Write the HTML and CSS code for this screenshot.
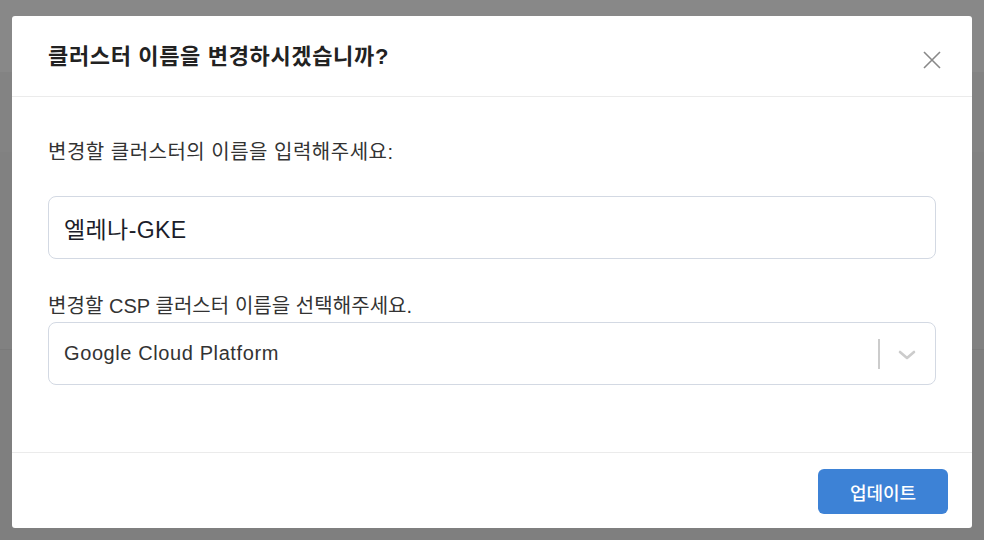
FILE: index.html
```html
<!DOCTYPE html>
<html lang="ko">
<head>
<meta charset="utf-8">
<title>클러스터 이름 변경</title>
<link rel="stylesheet" href="styles.css">
</head>
<body>
<div class="modal">
  <div class="modal-header">
    <h2 class="modal-title">클러스터 이름을 변경하시겠습니까?</h2>
    <button class="close-btn" aria-label="닫기">
      <svg width="18" height="18" viewBox="0 0 18 18"><path d="M1 1 L17 17 M17 1 L1 17" stroke="#888888" stroke-width="1.6" fill="none"/></svg>
    </button>
  </div>
  <div class="modal-body">
    <label class="field-label first">변경할 클러스터의 이름을 입력해주세요:</label>
    <div class="text-input">엘레나-GKE</div>
    <label class="field-label second">변경할 CSP 클러스터 이름을 선택해주세요.</label>
    <div class="select">
      <span class="select-value">Google Cloud Platform</span>
      <span class="select-indicators">
        <span class="select-sep"></span>
        <svg class="chevron" width="20" height="20" viewBox="0 0 20 20"><path d="M3 7 L10 13 L17 7" stroke="#cccccc" stroke-width="2.6" fill="none" stroke-linecap="round" stroke-linejoin="round"/></svg>
      </span>
    </div>
  </div>
  <div class="modal-footer">
    <button class="primary-btn">업데이트</button>
  </div>
</div>
</body>
</html>
```
FILE: styles.css
```css
html, body {
  margin: 0;
  height: 100%;
}
body {
  padding: 16px 12px 12px;
  box-sizing: border-box;
  background: linear-gradient(to bottom, #888888 0, #888888 72px, #838383 72px, #838383 152px, #818181 152px, #818181 349px, #7a7a7a 349px, #7a7a7a 350px, #7f7f7f 350px);
  font-family: "Liberation Sans", "Noto Sans CJK KR", sans-serif;
}
.modal {
  width: 960px;
  height: 512px;
  background: #ffffff;
  border-radius: 3px;
  display: flex;
  flex-direction: column;
  box-sizing: border-box;
}
.modal-header {
  height: 81px;
  box-sizing: border-box;
  border-bottom: 1px solid #ebebeb;
  display: flex;
  align-items: center;
  justify-content: space-between;
  padding: 0 31px 0 36px;
}
.modal-title {
  margin: 0;
  font-size: 22px;
  font-weight: 700;
  color: #222222;
  line-height: 28px;
  letter-spacing: 0.65px;
  padding-top: 2px;
}
.close-btn {
  border: 0;
  background: none;
  padding: 0;
  width: 18px;
  height: 18px;
  display: flex;
  margin-top: 8px;
}
.modal-body {
  flex: 1;
  padding: 43px 36px 0;
  display: flex;
  flex-direction: column;
}
.field-label {
  display: block;
  font-size: 20px;
  line-height: 24px;
  color: #333333;
  letter-spacing: 0.5px;
}
.field-label.first {
  margin-bottom: 32px;
}
.field-label.second {
  margin-top: 35px;
  margin-bottom: 4px;
  letter-spacing: 0.05px;
}
.text-input {
  height: 63px;
  box-sizing: border-box;
  border: 1px solid #d3d9e3;
  border-radius: 8px;
  padding: 0 15px;
  display: flex;
  align-items: center;
  font-size: 23px;
  letter-spacing: 0.4px;
  color: #1b1d2a;
}
.select {
  height: 63px;
  box-sizing: border-box;
  border: 1px solid #d3d9e3;
  border-radius: 8px;
  padding: 0 0 0 15px;
  display: flex;
  align-items: center;
  justify-content: space-between;
}
.select-value {
  font-size: 20px;
  letter-spacing: 0.6px;
  color: #333333;
}
.select-indicators {
  display: flex;
  align-items: center;
  padding-right: 18px;
}
.select-sep {
  width: 2px;
  height: 30px;
  background: #cccccc;
  margin-right: 17px;
}
.chevron {
  display: block;
  margin-top: 2px;
}
.modal-footer {
  border-top: 1px solid #ebebeb;
  padding: 16px 24px 14px;
  display: flex;
  justify-content: flex-end;
}
.primary-btn {
  width: 130px;
  height: 45px;
  border: 0;
  border-radius: 6px;
  background: #3d82d6;
  color: #ffffff;
  font-family: "Liberation Sans", "Noto Sans CJK KR", sans-serif;
  font-size: 18px;
  font-weight: 500;
}
```
